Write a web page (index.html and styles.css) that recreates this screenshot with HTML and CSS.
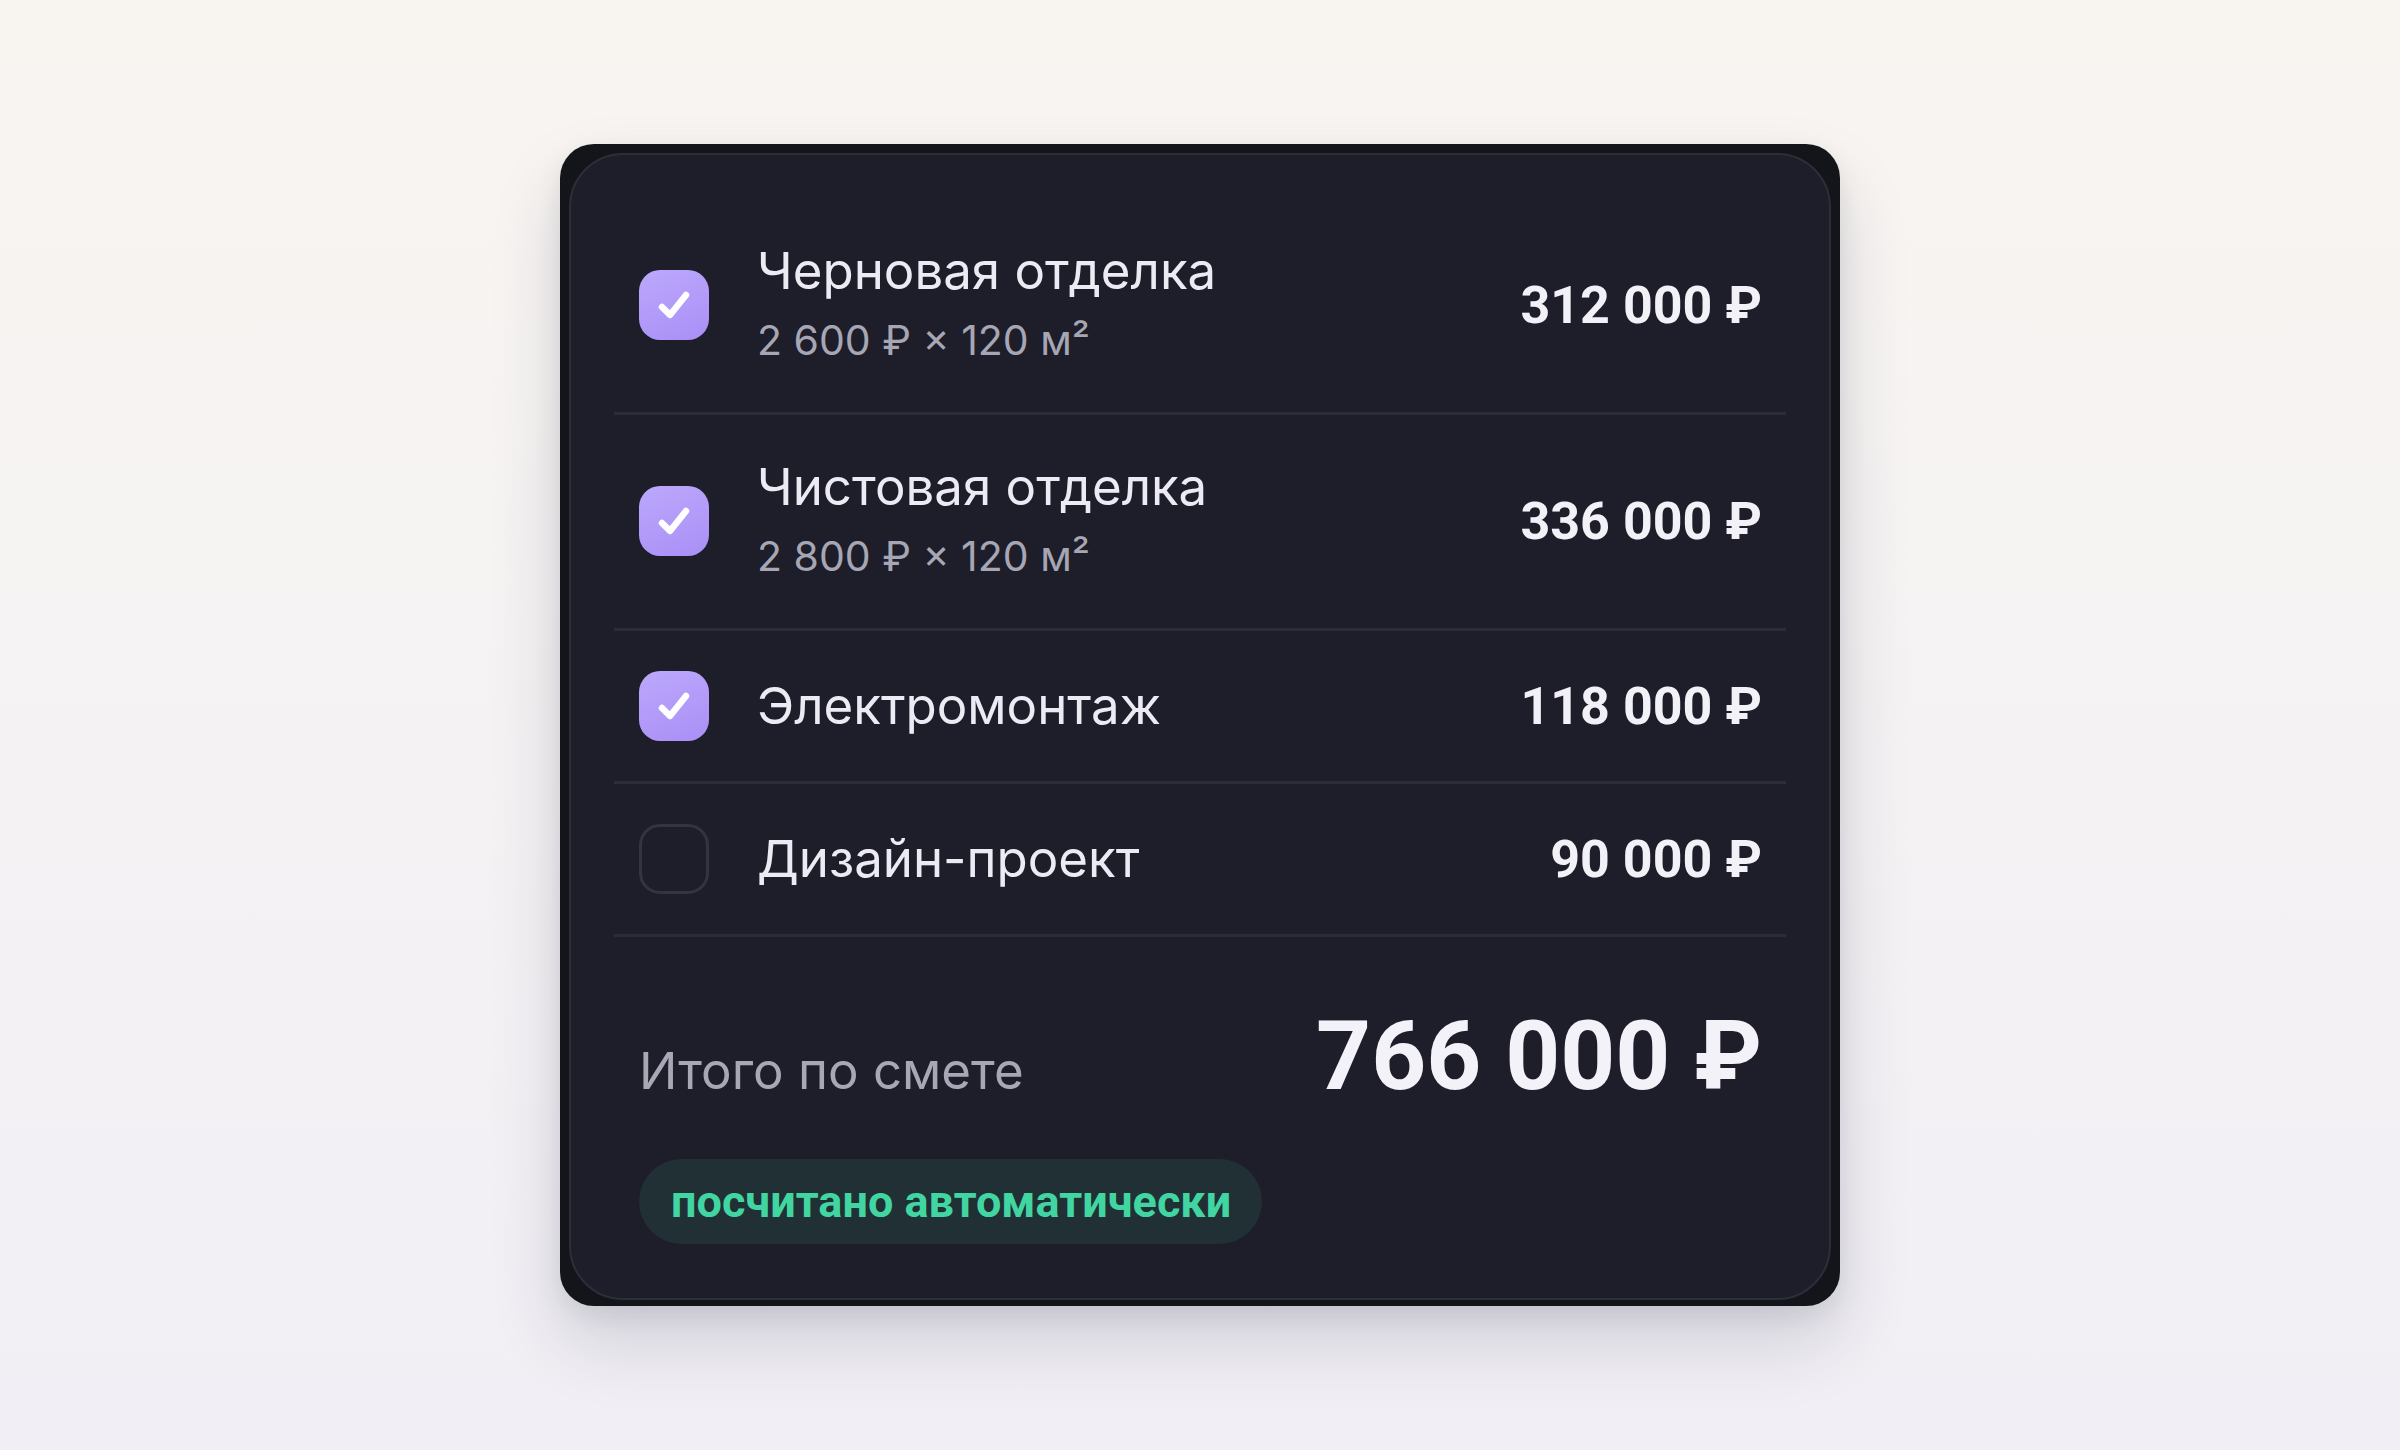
FILE: index.html
```html
<!DOCTYPE html>
<html lang="ru">
<head>
  <meta charset="UTF-8" />
  <meta name="viewport" content="width=device-width, initial-scale=1.0"/>
  <title>Смета</title>

  <link rel="stylesheet" href="styles.css">
</head>
<body>
  <div class="estimate-frame">
    <div class="estimate">

      <div class="item">
        <span class="check checked">
          <svg viewBox="0 0 70 70"><polyline points="23,37 31,45 47,25" /></svg>
        </span>
        <div class="item-text">
          <div class="item-title">Черновая отделка</div>
          <div class="item-sub">2&nbsp;600&nbsp;₽ × 120 м²</div>
        </div>
        <div class="item-price">312&nbsp;000&nbsp;₽</div>
      </div>

      <div class="item">
        <span class="check checked">
          <svg viewBox="0 0 70 70"><polyline points="23,37 31,45 47,25" /></svg>
        </span>
        <div class="item-text">
          <div class="item-title">Чистовая отделка</div>
          <div class="item-sub">2&nbsp;800&nbsp;₽ × 120 м²</div>
        </div>
        <div class="item-price">336&nbsp;000&nbsp;₽</div>
      </div>

      <div class="item single">
        <span class="check checked">
          <svg viewBox="0 0 70 70"><polyline points="23,37 31,45 47,25" /></svg>
        </span>
        <div class="item-text">
          <div class="item-title">Электромонтаж</div>
        </div>
        <div class="item-price">118&nbsp;000&nbsp;₽</div>
      </div>

      <div class="item single">
        <span class="check"></span>
        <div class="item-text">
          <div class="item-title">Дизайн-проект</div>
        </div>
        <div class="item-price">90&nbsp;000&nbsp;₽</div>
      </div>

      <div class="total">
        <div class="total-row">
          <span class="total-label">Итого по смете</span>
          <span class="total-sum">766&nbsp;000&nbsp;₽</span>
        </div>
        <span class="auto-badge">посчитано автоматически</span>
      </div>

    </div>
  </div>
</body>
</html>
```

FILE: styles.css
```css
* {
  margin: 0;
  padding: 0;
  box-sizing: border-box;
}

body {
  min-height: 100vh;
  background: linear-gradient(#f8f5f1, #f1eff5);
  font-family: Inter, 'Noto Sans', sans-serif;
  display: flex;
  align-items: center;
  justify-content: center;
}

.estimate-frame {
  width: 1280px;
  padding: 9px 9px 6px;
  background: #14151b;
  border-radius: 34px;
  box-shadow: 0 36px 70px rgba(40, 38, 70, 0.16),
              0 10px 24px rgba(20, 20, 40, 0.08);
}

.estimate {
  background: #1d1e29;
  border: 2px solid #2c2e38;
  border-radius: 54px;
  padding: 44px 43px 0;
}

.item {
  display: flex;
  align-items: center;
  padding: 40px 24px 41px;
  border-bottom: 3px solid #2a2c37;
}

.item.single {
  padding: 40px 24px;
}

.check {
  flex: none;
  width: 70px;
  height: 70px;
  border-radius: 21px;
  border: 3px solid #32343e;
  margin: 0 48px 0 1px;
}

.check.checked {
  border: none;
  background: linear-gradient(160deg, #bca8fc, #a98ff6);
}

.check svg {
  display: block;
  width: 70px;
  height: 70px;
  fill: none;
  stroke: #fff;
  stroke-width: 6.5;
  stroke-linecap: round;
  stroke-linejoin: round;
}

.item-text {
  flex: 1;
}

.item-title {
  font-size: 51px;
  line-height: 64px;
  color: #ecebf4;
}

.item-sub {
  margin-top: 6px;
  font-size: 41px;
  line-height: 62px;
  color: #a6a6b4;
}

.item-price {
  font-family: Roboto, 'Noto Sans', sans-serif;
  font-weight: 700;
  font-size: 52px;
  color: #f2f1f8;
}

.total {
  padding: 71px 24px 54px;
}

.total-row {
  display: flex;
  align-items: baseline;
  justify-content: space-between;
}

.total-label {
  margin-left: 1px;
  font-size: 51px;
  color: #a8a7b6;
}

.total-sum {
  font-family: Roboto, 'Noto Sans', sans-serif;
  font-weight: 700;
  font-size: 96px;
  line-height: 1;
  color: #f3f2f9;
}

.auto-badge {
  display: inline-flex;
  align-items: center;
  height: 85px;
  margin: 55px 0 0 1px;
  padding: 0 31px 0 32px;
  border-radius: 43px;
  background: #213035;
  color: #41d6a1;
  font-family: Roboto, 'Noto Sans', sans-serif;
  font-weight: 700;
  font-size: 45px;
}
```
